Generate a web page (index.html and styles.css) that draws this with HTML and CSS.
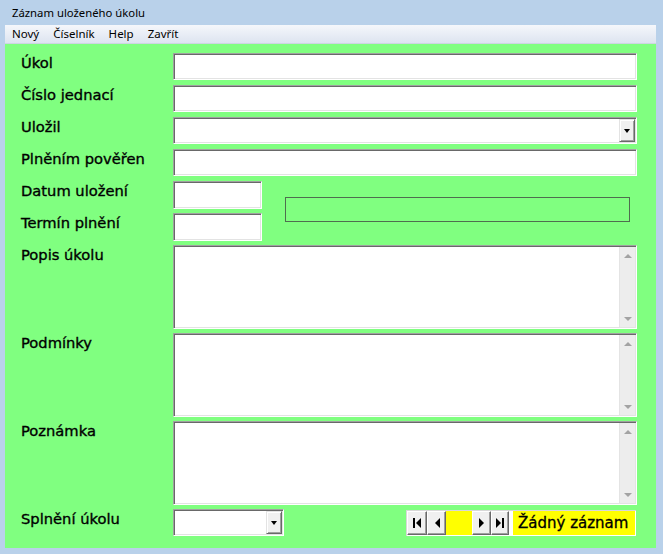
FILE: index.html
```html
<!DOCTYPE html>
<html lang="cs">
<head>
<meta charset="utf-8">
<title>Záznam uloženého úkolu</title>
<link rel="stylesheet" href="styles.css">
</head>
<body>
<div class="window">
  <div class="titlebar">Záznam uloženého úkolu</div>
  <div class="menubar">
    <span class="menu-item">Nový</span>
    <span class="menu-item">Číselník</span>
    <span class="menu-item">Help</span>
    <span class="menu-item">Zavřít</span>
  </div>
  <div class="form">
    <div class="lbl">Úkol</div>
    <div class="field span"></div>

    <div class="lbl">Číslo jednací</div>
    <div class="field span"></div>

    <div class="lbl">Uložil</div>
    <div class="field span combo"><span class="dropbtn"><span class="droparrow"></span></span></div>

    <div class="lbl">Plněním pověřen</div>
    <div class="field span"></div>

    <div class="lbl">Datum uložení</div>
    <div class="field date"></div>
    <div class="statusbox"></div>

    <div class="lbl">Termín plnění</div>
    <div class="field date"></div>

    <div class="lbl">Popis úkolu</div>
    <div class="field memo"><span class="memo-text"></span><span class="vscroll"><span class="arr-up"></span><span class="arr-down"></span></span></div>

    <div class="lbl">Podmínky</div>
    <div class="field memo"><span class="memo-text"></span><span class="vscroll"><span class="arr-up"></span><span class="arr-down"></span></span></div>

    <div class="lbl">Poznámka</div>
    <div class="field memo"><span class="memo-text"></span><span class="vscroll"><span class="arr-up"></span><span class="arr-down"></span></span></div>

    <div class="lbl">Splnění úkolu</div>
    <div class="bottom-row">
      <div class="field small-combo combo"><span class="dropbtn"><span class="droparrow"></span></span></div>
      <div class="nav">
        <span class="navbtn w20"><svg width="9" height="10" viewBox="0 0 9 10"><rect x="0" y="0" width="2" height="10"/><polygon points="8,0 3,5 8,10"/></svg></span>
        <span class="navbtn w19"><svg width="6" height="10" viewBox="0 0 6 10"><polygon points="6,0 1,5 6,10"/></svg></span>
        <span class="navpos"></span>
        <span class="navbtn w19"><svg width="6" height="10" viewBox="0 0 6 10"><polygon points="0,0 5,5 0,10"/></svg></span>
        <span class="navbtn w18"><svg width="9" height="10" viewBox="0 0 9 10"><polygon points="0,0 5,5 0,10"/><rect x="6" y="0" width="2" height="10"/></svg></span>
        <span class="navlabel">Žádný záznam</span>
      </div>
    </div>
  </div>
</div>
</body>
</html>
```

FILE: styles.css
```css
* { box-sizing: border-box; }
html, body { margin: 0; padding: 0; }
body { width: 663px; height: 554px; overflow: hidden; background: #b9d1ea; }

.window {
  width: 663px;
  height: 554px;
  background: #b9d1ea;
  padding: 0 7px 6px 5px;
  display: flex;
  flex-direction: column;
}

.titlebar {
  height: 25px;
  padding-left: 7px;
  font-family: "Noto Sans", sans-serif;
  font-size: 11.3px;
  line-height: 26px;
  color: #000;
}

.menubar {
  height: 19px;
  display: flex;
  align-items: center;
  background: linear-gradient(#f5f7fb, #dde4f0);
  border-bottom: 1px solid #cdd5e1;
  font-family: "Noto Sans", sans-serif;
  font-size: 11.5px;
  color: #000;
}
.menu-item { padding: 0 7px; line-height: 18px; }

.form {
  flex: 1;
  background: #80ff80;
  padding: 9px 19px 0 16px;
  display: grid;
  grid-template-columns: 152px 89px 1fr;
  grid-template-rows: repeat(6, 28px) repeat(3, 84px) 27px;
  row-gap: 4px;
}

.lbl {
  grid-column: 1;
  font-family: "DejaVu Sans", sans-serif;
  font-size: 14.7px;
  line-height: 18px;
  padding-top: 1px;
  color: #000;
  -webkit-text-stroke: 0.35px #000;
}

.field {
  background: #fff;
  border: 1px solid;
  border-color: #a0a0a0 #ffffff #ffffff #a0a0a0;
  box-shadow: inset 1px 1px #696969, inset -1px -1px #e3e3e3;
}
.span { grid-column: 2 / 4; height: 27px; }
.date { grid-column: 2; height: 28px; }

.combo { display: flex; justify-content: flex-end; padding: 1px; }
.dropbtn {
  width: 16px;
  height: 100%;
  background: #f0f0f0;
  border: 1px solid;
  border-color: #e3e3e3 #696969 #696969 #e3e3e3;
  box-shadow: inset 1px 1px #ffffff, inset -1px -1px #a0a0a0;
  display: flex;
  align-items: center;
  justify-content: center;
}
.droparrow {
  width: 0; height: 0;
  border-left: 3.5px solid transparent;
  border-right: 3.5px solid transparent;
  border-top: 4px solid #000;
  margin-top: 1px;
}

.statusbox {
  grid-column: 3;
  grid-row: 5 / 7;
  align-self: start;
  margin: 16px 7px 0 23px;
  height: 25px;
  border: 1px solid #4f6e4f;
}

.memo {
  grid-column: 2 / 4;
  display: flex;
  padding: 1px;
}
.memo-text { flex: 1; }
.vscroll {
  width: 16px;
  background: #ededed;
  border-left: 1px solid #e4e4e4;
  display: flex;
  flex-direction: column;
  justify-content: space-between;
  align-items: center;
  padding: 7px 0 6px;
}
.arr-up {
  width: 0; height: 0;
  border-left: 4px solid transparent;
  border-right: 4px solid transparent;
  border-bottom: 4px solid #a3a3a3;
}
.arr-down {
  width: 0; height: 0;
  border-left: 4px solid transparent;
  border-right: 4px solid transparent;
  border-top: 4px solid #a3a3a3;
}

.bottom-row {
  grid-column: 2 / 4;
  display: flex;
  justify-content: space-between;
  align-items: flex-start;
  padding-right: 1px;
}
.small-combo { width: 111px; height: 27px; }

.nav {
  margin-top: 1px;
  height: 26px;
  width: 230px;
  display: flex;
  background: #fff;
  border-top: 1px solid #d8d8d8;
  border-left: 1px solid #d8d8d8;
  padding: 0 1px 1px 0;
}
.navbtn {
  height: 100%;
  background: #f0f0f0;
  border: 1px solid;
  border-color: #ffffff #696969 #696969 #ffffff;
  box-shadow: inset -1px -1px #a0a0a0;
  display: flex;
  align-items: center;
  justify-content: center;
}
.navbtn svg { fill: #000; display: block; }
.w20 { width: 20px; }
.w19 { width: 19px; }
.w18 { width: 18px; }
.navpos { width: 26px; height: 100%; background: #ffff00; }
.navlabel {
  margin-left: 4px;
  flex: 1;
  background: #ffff00;
  font-family: "DejaVu Sans", sans-serif;
  font-size: 15px;
  line-height: 24px;
  padding-left: 5px;
  color: #000;
  -webkit-text-stroke: 0.3px #000;
  white-space: nowrap;
}
```
